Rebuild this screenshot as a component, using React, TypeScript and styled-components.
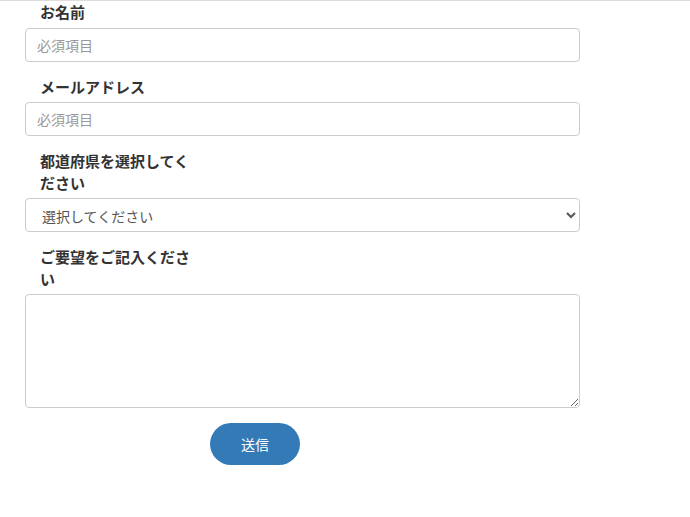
import React from 'react';
import styled, { createGlobalStyle } from 'styled-components';

const GlobalStyle = createGlobalStyle`
  html, body {
    margin: 0;
    padding: 0;
    background: #ffffff;
  }
  body {
    font-family: "Noto Sans CJK JP", "Noto Sans", "Liberation Sans", sans-serif;
    color: #333333;
  }
`;

const Page = styled.div`
  border-top: 1px solid #dddddd;
  width: 690px;
  min-height: 516px;
`;

const Form = styled.form`
  width: 555px;
  margin-left: 25px;
  display: flex;
  flex-direction: column;
`;

const Field = styled.div`
  display: flex;
  flex-direction: column;
  margin-bottom: 14px;
`;

const Label = styled.label`
  width: 160px;
  padding-left: 15px;
  font-size: 15px;
  font-weight: 700;
  line-height: 21.5px;
  color: #333333;
  margin-bottom: 5px;
`;

const controlBase = `
  box-sizing: border-box;
  width: 100%;
  border: 1px solid #cccccc;
  border-radius: 4px;
  background: #ffffff;
  font-family: "Noto Sans CJK JP", "Noto Sans", "Liberation Sans", sans-serif;
  font-size: 14px;
  color: #555555;
  outline: none;
  margin: 0;
`;

const Input = styled.input`
  ${controlBase}
  height: 34px;
  padding: 6px 11px;

  &::placeholder {
    color: #999999;
  }
`;

const Select = styled.select`
  ${controlBase}
  height: 34px;
  padding: 6px 12px;
`;

const TextArea = styled.textarea`
  ${controlBase}
  height: 114px;
  padding: 6px 12px;
  resize: both;
  display: block;
`;

const ButtonRow = styled.div`
  display: flex;
  padding-left: 185px;
  margin-top: 1px;
`;

const SubmitButton = styled.button`
  width: 90px;
  height: 42px;
  border: none;
  border-radius: 21px;
  background: #337ab7;
  color: #ffffff;
  font-family: "Noto Sans CJK JP", "Noto Sans", "Liberation Sans", sans-serif;
  font-size: 14px;
  cursor: pointer;
`;

const prefectures = ['北海道', '青森県', '岩手県', '宮城県', '東京都', '大阪府', '福岡県', '沖縄県'];

export default function App() {
  return (
    <>
      <GlobalStyle />
      <Page>
        <Form onSubmit={e => e.preventDefault()}>
          <Field>
            <Label htmlFor="name">お名前</Label>
            <Input id="name" placeholder="必須項目" />
          </Field>
          <Field>
            <Label htmlFor="email">メールアドレス</Label>
            <Input id="email" type="email" placeholder="必須項目" />
          </Field>
          <Field>
            <Label htmlFor="pref">都道府県を選択してください</Label>
            <Select id="pref" defaultValue="">
              <option value="">選択してください</option>
              {prefectures.map(p => (
                <option key={p} value={p}>{p}</option>
              ))}
            </Select>
          </Field>
          <Field>
            <Label htmlFor="msg">ご要望をご記入ください</Label>
            <TextArea id="msg" />
          </Field>
          <ButtonRow>
            <SubmitButton type="submit">送信</SubmitButton>
          </ButtonRow>
        </Form>
      </Page>
    </>
  );
}
